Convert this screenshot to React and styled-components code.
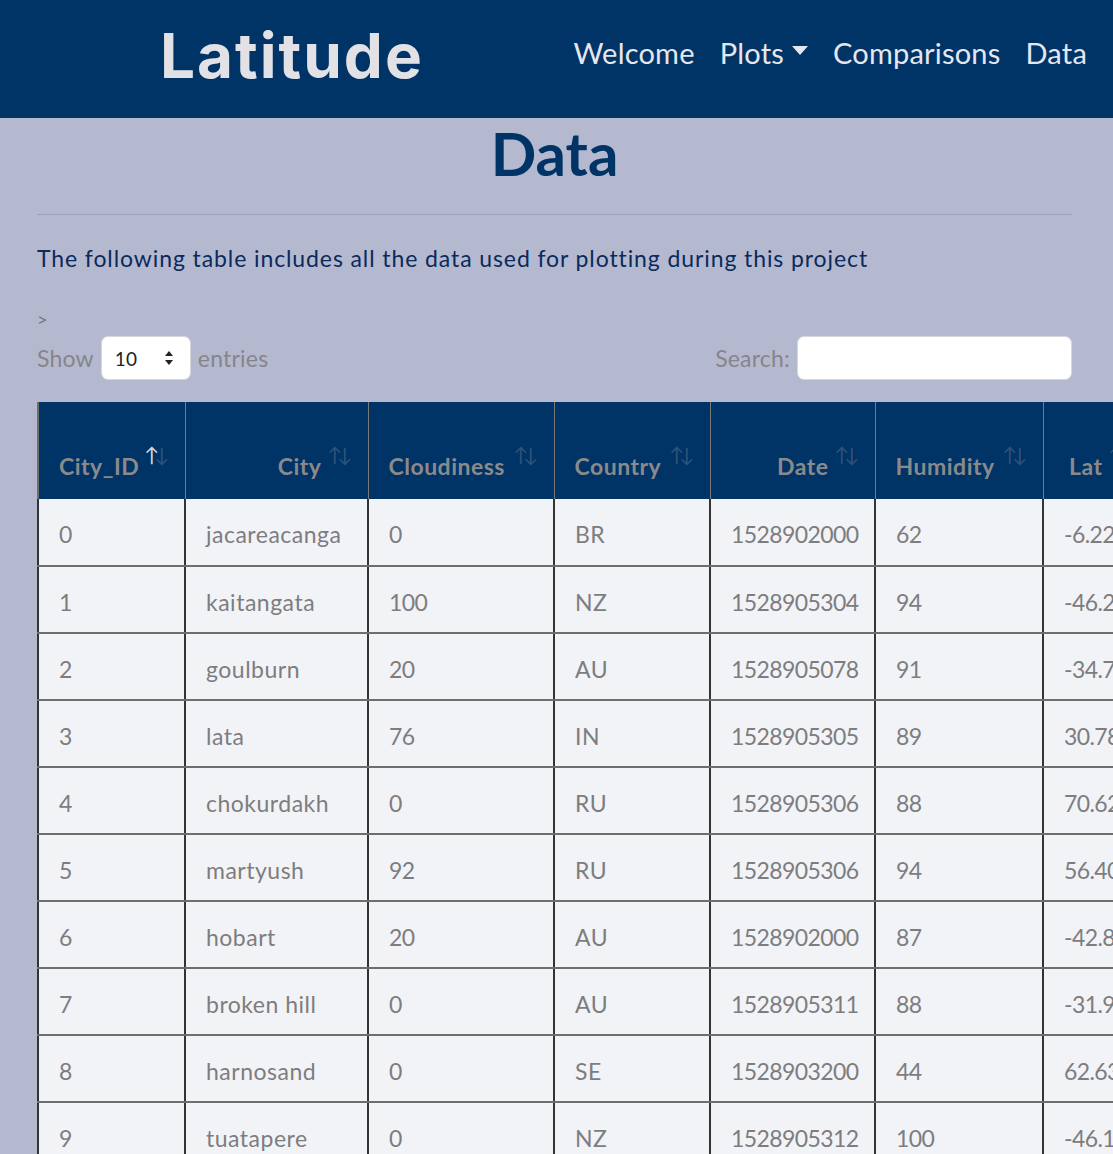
import React from 'react'
import styled, { createGlobalStyle } from 'styled-components'

const GlobalStyle = createGlobalStyle`
  html {
    scrollbar-width: none;
  }
  body {
    margin: 0;
    background-color: #b5b9d0;
    font-family: "Lato", "Open Sans", sans-serif;
    overflow-x: hidden;
  }
`

const Nav = styled.header`
  background-color: #003366;
  height: 118px;
  display: flex;
  align-items: center;
  justify-content: space-between;
  padding: 0 26px 0 160px;
  box-sizing: border-box;
`

const Brand = styled.div`
  font-family: "Inter", "Lato", sans-serif;
  font-weight: 700;
  font-size: 62px;
  color: #e2e2e6;
  letter-spacing: 2px;
  margin-top: -8px;
`

const NavLinks = styled.nav`
  display: flex;
  align-items: center;
  gap: 25px;
  margin-top: -14px;
`

const NavLink = styled.a`
  color: #e6e7ee;
  font-size: 29px;
  letter-spacing: 0.2px;
  text-decoration: none;
  display: flex;
  align-items: center;
  gap: 8px;
`

const Caret = styled.span`
  width: 0;
  height: 0;
  border-left: 8px solid transparent;
  border-right: 8px solid transparent;
  border-top: 9px solid #e6e7ee;
  margin-top: -4px;
`

const Main = styled.main`
  padding: 0 41px 0 37px;
`

const Title = styled.h1`
  margin: 0;
  text-align: center;
  color: #003366;
  font-size: 60px;
  font-weight: 700;
  line-height: 70px;
`

const Rule = styled.hr`
  margin: 26px 0 0;
  border: 0;
  border-top: 1px solid #9ea3bb;
`

const Intro = styled.p`
  margin: 28px 0 0;
  color: #0a2a5c;
  font-size: 23px;
  letter-spacing: 0.9px;
  line-height: 30px;
`

const Chevron = styled.div`
  margin-top: 36px;
  color: #73747f;
  font-size: 18px;
  line-height: 20px;
`

const Controls = styled.div`
  margin-top: 7px;
  display: flex;
  justify-content: space-between;
  align-items: center;
  height: 44px;
`

const Label = styled.label`
  display: flex;
  align-items: center;
  gap: 7px;
  color: #85858a;
  font-size: 23px;
  letter-spacing: 0.2px;
`

const SelectBox = styled.div`
  width: 90px;
  height: 44px;
  box-sizing: border-box;
  background: #fff;
  border: 1px solid #d6d6dc;
  border-radius: 7px;
  display: flex;
  align-items: center;
  justify-content: space-between;
  padding: 0 16px 0 13px;
  color: #222;
  font-size: 19px;
`

const SearchInput = styled.input`
  width: 275px;
  height: 44px;
  box-sizing: border-box;
  border: 1px solid #d6d6dc;
  border-radius: 7px;
  background: #fff;
  outline: none;
`

const Table = styled.table`
  margin-top: 22px;
  border-collapse: collapse;
  table-layout: fixed;
  width: 1540px;
  border-left: 2px solid #6d6d6d;
`

const Th = styled.th`
  position: relative;
  height: 97px;
  box-sizing: border-box;
  background: #003366;
  color: #8a8a8c;
  font-size: 23px;
  font-weight: 700;
  letter-spacing: 0.5px;
  text-align: ${p => p.$align};
  vertical-align: bottom;
  padding: 0 46px 19px 20px;
  border-left: 1px solid #7a7a7a;
  white-space: nowrap;
  &::before, &::after {
    position: absolute;
    top: 40px;
    font-size: 20px;
    font-weight: 400;
    color: #9a9ba2;
  }
  &::before {
    content: "↑";
    right: 25px;
    opacity: ${p => (p.$active ? 1 : 0.3)};
    color: ${p => (p.$active ? '#d8d8de' : '#9a9ba2')};
  }
  &::after {
    content: "↓";
    right: 15px;
    opacity: 0.3;
  }
`

const Td = styled.td`
  height: 67px;
  box-sizing: border-box;
  background: #f2f3f7;
  color: #7d7d80;
  font-size: 23px;
  letter-spacing: ${p => (p.$num ? '-0.6px' : '0.5px')};
  padding: 4px 20px 0;
  border: 2px solid #6e6e6e;
  border-left-color: #333;
  border-right-color: #333;
  border-top: 0;
  white-space: nowrap;
`

const columns = [
  ['City_ID', 147, 'left'],
  ['City', 183, 'right'],
  ['Cloudiness', 186, 'left'],
  ['Country', 156, 'left'],
  ['Date', 165, 'right'],
  ['Humidity', 168, 'left'],
  ['Lat', 106, 'right'],
  ['Lng', 120, 'right'],
  ['Max Temp', 155, 'left'],
  ['Wind Speed', 160, 'left'],
]

const rows = [
  [0, 'jacareacanga', 0, 'BR', 1528902000, 62, -6.22, -57.76, 89.14, 2.89],
  [1, 'kaitangata', 100, 'NZ', 1528905304, 94, -46.28, 169.85, 44.13, 4.09],
  [2, 'goulburn', 20, 'AU', 1528905078, 91, -34.75, 149.72, 50.0, 4.7],
  [3, 'lata', 76, 'IN', 1528905305, 89, 30.78, 78.62, 66.86, 1.45],
  [4, 'chokurdakh', 0, 'RU', 1528905306, 88, 70.62, 147.9, 36.11, 3.4],
  [5, 'martyush', 92, 'RU', 1528905306, 94, 56.4, 61.88, 52.71, 7.78],
  [6, 'hobart', 20, 'AU', 1528902000, 87, -42.88, 147.33, 42.8, 4.7],
  [7, 'broken hill', 0, 'AU', 1528905311, 88, -31.95, 141.43, 50.0, 10.29],
  [8, 'harnosand', 0, 'SE', 1528903200, 44, 62.63, 17.94, 62.6, 16.11],
  [9, 'tuatapere', 0, 'NZ', 1528905312, 100, -46.13, 167.69, 44.13, 4.09],
]

function SortArrows() {
  return (
    <svg width="10" height="16" viewBox="0 0 10 16">
      <path d="M5 1 L9 6 L1 6 Z" fill="#222" />
      <path d="M5 15 L9 10 L1 10 Z" fill="#222" />
    </svg>
  )
}

function App() {
  return (
    <>
      <GlobalStyle />
      <Nav>
        <Brand>Latitude</Brand>
        <NavLinks>
          <NavLink href="#">Welcome</NavLink>
          <NavLink href="#">Plots <Caret /></NavLink>
          <NavLink href="#">Comparisons</NavLink>
          <NavLink href="#">Data</NavLink>
        </NavLinks>
      </Nav>
      <Main>
        <Title>Data</Title>
        <Rule />
        <Intro>The following table includes all the data used for plotting during this project</Intro>
        <Chevron>&gt;</Chevron>
        <Controls>
          <Label>
            Show
            <SelectBox>10 <SortArrows /></SelectBox>
            entries
          </Label>
          <Label>
            Search:
            <SearchInput type="search" />
          </Label>
        </Controls>
        <Table>
          <colgroup>
            {columns.map(([name, w]) => <col key={name} style={{ width: w }} />)}
          </colgroup>
          <thead>
            <tr>
              {columns.map(([name, , align], i) => (
                <Th key={name} $align={align} $active={i === 0}>{name}</Th>
              ))}
            </tr>
          </thead>
          <tbody>
            {rows.map(r => (
              <tr key={r[0]}>
                {r.map((v, i) => (
                  <Td key={i} $num={typeof v === 'number'}>
                    {typeof v === 'number' && i >= 6 ? v.toFixed(2) : v}
                  </Td>
                ))}
              </tr>
            ))}
          </tbody>
        </Table>
      </Main>
    </>
  )
}

export default App
